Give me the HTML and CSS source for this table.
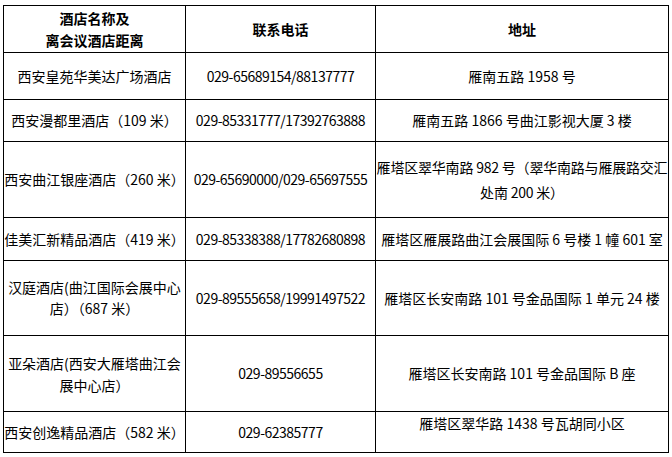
FILE: index.html
```html
<!DOCTYPE html>
<html lang="zh-CN">
<head>
<meta charset="utf-8">
<title>酒店信息</title>
<link rel="stylesheet" href="styles.css">
</head>
<body>
<table class="hotels">
  <thead>
    <tr class="r-head">
      <th class="h-name">酒店名称及<br>离会议酒店距离</th>
      <th class="h-tel">联系电话</th>
      <th class="h-addr">地址</th>
    </tr>
  </thead>
  <tbody>
    <tr class="r1">
      <td>西安皇苑华美达广场酒店</td>
      <td class="tel">029-65689154/88137777</td>
      <td>雁南五路 1958 号</td>
    </tr>
    <tr class="r2">
      <td>西安漫都里酒店（109 米）</td>
      <td class="tel">029-85331777/17392763888</td>
      <td>雁南五路 1866 号曲江影视大厦 3 楼</td>
    </tr>
    <tr class="r3">
      <td>西安曲江银座酒店（260 米）</td>
      <td class="tel">029-65690000/029-65697555</td>
      <td class="tall">雁塔区翠华南路 982 号（翠华南路与雁展路交汇<br>处南 200 米）</td>
    </tr>
    <tr class="r4">
      <td>佳美汇新精品酒店（419 米）</td>
      <td class="tel">029-85338388/17782680898</td>
      <td>雁塔区雁展路曲江会展国际 6 号楼 1 幢 601 室</td>
    </tr>
    <tr class="r5">
      <td class="wrap">汉庭酒店(曲江国际会展中心<br>店）（687 米）</td>
      <td class="tel">029-89555658/19991497522</td>
      <td>雁塔区长安南路 101 号金品国际 1 单元 24 楼</td>
    </tr>
    <tr class="r6">
      <td class="wrap22">亚朵酒店(西安大雁塔曲江会<br>展中心店）</td>
      <td class="tel">029-89556655</td>
      <td>雁塔区长安南路 101 号金品国际 B 座</td>
    </tr>
    <tr class="r7">
      <td>西安创逸精品酒店（582 米）</td>
      <td class="tel">029-62385777</td>
      <td class="top">雁塔区翠华路 1438 号瓦胡同小区</td>
    </tr>
  </tbody>
</table>
</body>
</html>
```

FILE: styles.css
```css
html, body {
  margin: 0;
  background: #fff;
}

body {
  padding: 5px 0 0 3px;
  font-family: "Noto Sans CJK SC", "Liberation Sans", sans-serif;
  font-size: 14px;
  color: #000;
}

.hotels {
  border-collapse: separate;
  border-spacing: 0;
  table-layout: fixed;
  width: 666px;
  border-top: 1px solid #000;
  border-left: 1px solid #000;
}

.hotels th,
.hotels td {
  box-sizing: border-box;
  border-right: 1px solid #000;
  border-bottom: 1px solid #000;
  padding: 0;
  text-align: center;
  vertical-align: middle;
  white-space: nowrap;
  line-height: 21px;
  font-weight: normal;
}

.hotels th {
  font-weight: bold;
  line-height: 22px;
}

.h-name { width: 182px; }
.h-tel { width: 190px; }
.h-addr { width: 293px; }

.r-head th { height: 47px; }
.r1 td { height: 47px; }
.r2 td { height: 42px; }
.r3 td { height: 76px; }
.r4 td { height: 43px; }
.r5 td { height: 75px; }
.r6 td { height: 76px; }
.r7 td { height: 41px; }

.hotels .tel {
  letter-spacing: -0.5px;
}

.hotels .tall {
  line-height: 25px;
  letter-spacing: -0.2px;
}

.hotels .wrap {
  line-height: 21px;
}

.hotels .wrap22 {
  line-height: 22px;
}

.hotels .top {
  vertical-align: top;
  padding-top: 1px;
}
```
